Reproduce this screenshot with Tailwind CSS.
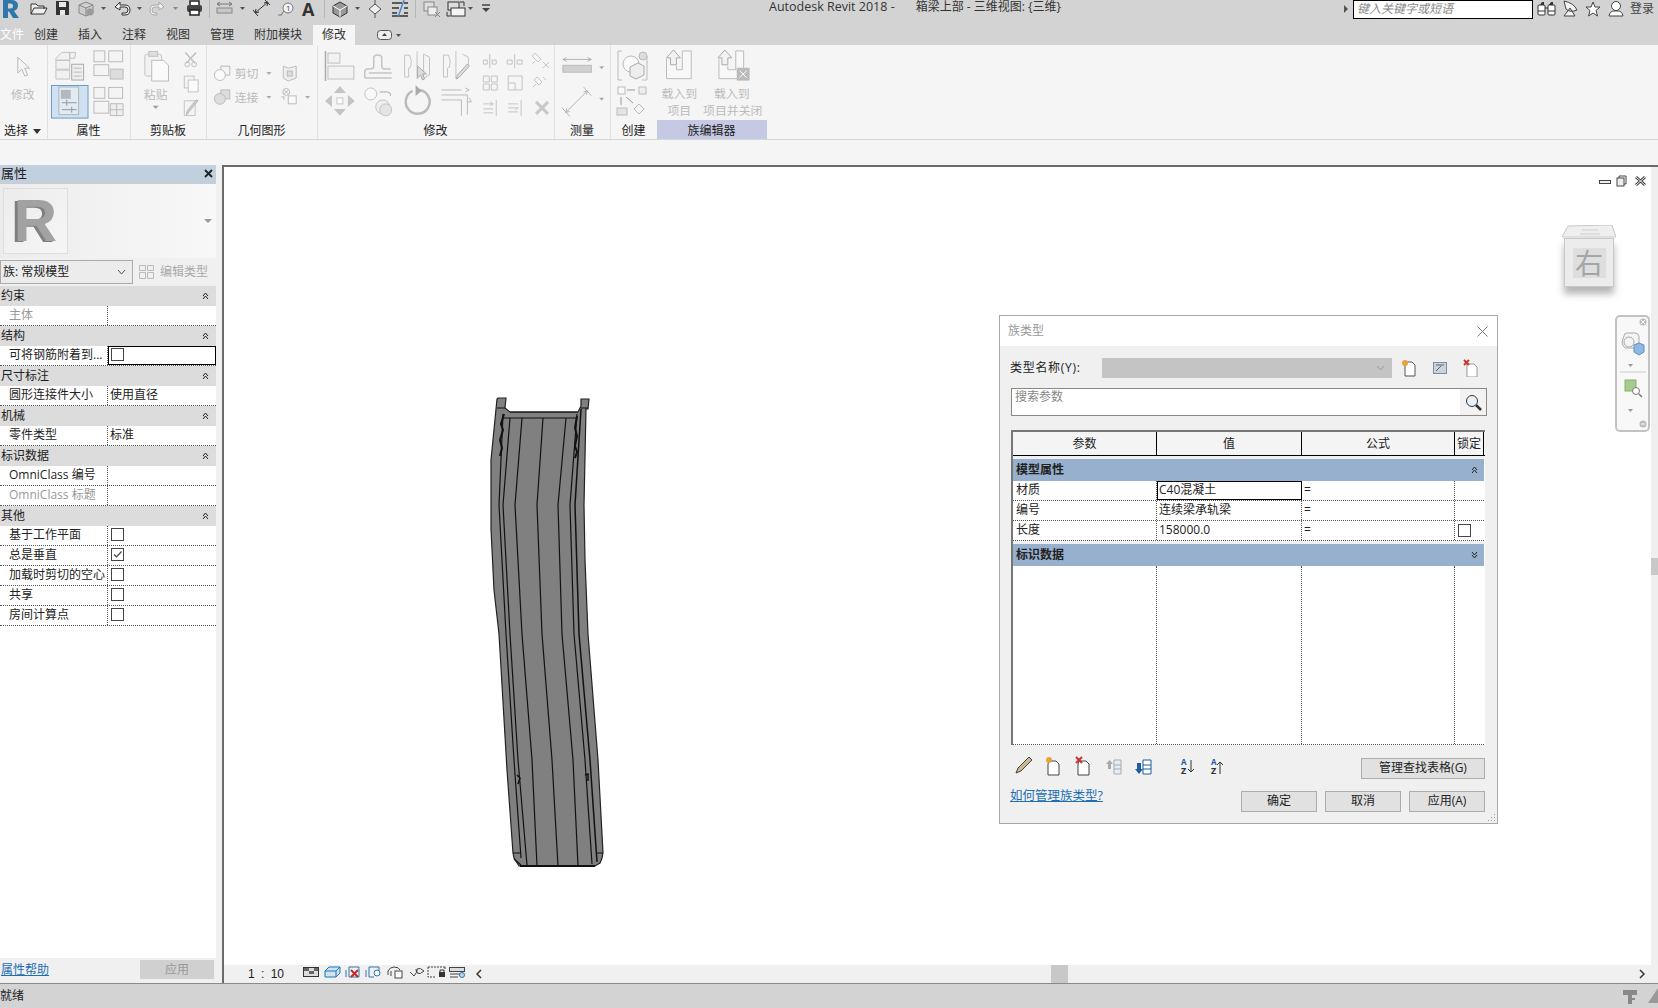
<!DOCTYPE html>
<html lang="zh-CN">
<head>
  <meta charset="UTF-8">
  <title>Autodesk Revit 2018</title>
  <script src="https://cdn.jsdelivr.net/npm/@tailwindcss/browser@4"></script>
</head>
<body class="bg-[#f5f5f5] overflow-hidden font-['Open_Sans','Noto_Sans_CJK_SC',sans-serif] text-[12px] leading-none text-[#222]">
<div class="relative w-[1658px] h-[1008px] flex flex-col overflow-hidden">

  <!-- title bar + tabs -->
  <header class="h-[45px] bg-[#d3d3d3] shrink-0">
    <div class="flex h-[20px] items-start">
      <svg class="w-[500px] h-[20px] shrink-0" viewBox="0 0 500 20">
        <path fill-rule="evenodd" d="M3 0h8q7 0 7 5.500 0 4-4 5.500l5 7h-6l-4-6.500H8V18H3zM8 3.500v5h2.500q2.500 0 2.500-2.500t-2.500-2.500z" fill="#2f77a8"/>
        <path d="M31 14V4h5l2 2h6v3M31 14l3-6h13l-3 6z" fill="#eee" stroke="#333"/>
        <path d="M56 1h12l1 1v13H56z" fill="#333"/><rect x="59" y="2" width="7" height="5" fill="#e8e8e8"/><rect x="60" y="10" width="5" height="5" fill="#e8e8e8"/>
        <path d="M79 5l7-3 7 3v8l-7 3-7-3zM79 5l7 3 7-3M86 8v8" fill="#ccc" stroke="#888"/><circle cx="90" cy="12" r="3.500" fill="#999"/>
        <path d="M101 7h5l-2.500 3z" fill="#555"/>
        <path d="M115 7l5-5v3h5q5 0 5 5t-5 5h-3v-2h3q3 0 3-3t-3-3h-5v3z" fill="#eee" stroke="#333"/>
        <path d="M137 7h5l-2.500 3z" fill="#555"/>
        <path d="M164 7l-5-5v3h-4q-5 0-5 5t5 5h2v-2h-2q-3 0-3-3t3-3h4v3z" fill="#eee" stroke="#aaa"/>
        <path d="M173 7h5l-2.500 3z" fill="#888"/>
        <rect x="190" y="1" width="9" height="5" fill="#fff" stroke="#222" stroke-width="1.500"/><rect x="187" y="5" width="15" height="7" rx="2" fill="#444"/><rect x="190" y="10" width="9" height="5" fill="#fff" stroke="#222" stroke-width="1.500"/>
        <path d="M209.500 0v18" stroke="#b5b5b5"/>
        <path d="M217 4h15M217 4l3-2M217 4l3 2M232 4l-3-2M232 4l-3 2" stroke="#777" fill="none"/><rect x="217" y="8" width="15" height="5" fill="#c8c8c8" stroke="#888"/>
        <path d="M240 7h5l-2.500 3z" fill="#555"/>
        <path d="M255 13l13-11M255 13l4-1M255 13l1-4M268 2l-4 1M268 2l-1 4M253 10l5 6M265 0l5 5" stroke="#333" fill="none"/>
        <circle cx="288" cy="8" r="5" fill="#f2f2f2" stroke="#777"/><path d="M281 15l3-4" stroke="#777"/><path d="M278 15h4" stroke="#777"/><text x="286" y="11" font-size="8" fill="#444">1</text>
        <text x="302" y="16" font-size="18" font-weight="700" fill="#333">A</text>
        <path d="M324.500 0v18" stroke="#b5b5b5"/>
        <path d="M333 6l7-4 7 4v7l-7 4-7-4z" fill="#999" stroke="#333"/><path d="M333 6l7 4 7-4M340 10v7" stroke="#fff" fill="none"/>
        <path d="M355 7h5l-2.500 3z" fill="#555"/>
        <path d="M369 9l6-5 6 5-6 5z" fill="#eee" stroke="#555"/><path d="M375 0v4M375 14v4" stroke="#555"/>
        <path d="M392 3h10M392 8h7M392 13h5M392 16h16M404 3h4M404 8h4M404 13h4" stroke="#333" stroke-width="1.500"/><path d="M398 17l6-17" stroke="#3b86d6" stroke-width="1.300"/>
        <path d="M415.500 0v18" stroke="#b5b5b5"/>
        <rect x="424" y="2" width="10" height="9" fill="#ddd" stroke="#888"/><rect x="428" y="7" width="9" height="8" fill="#eee" stroke="#888"/><path d="M435 12l5 5M440 12l-5 5" stroke="#888"/>
        <rect x="448" y="2" width="11" height="8" fill="#ddd" stroke="#333"/><rect x="451" y="8" width="14" height="8" fill="#f4f4f4" stroke="#333"/><path d="M460 2h4v4M447 12v4h3" stroke="#333" fill="none"/>
        <path d="M468 7h5l-2.500 3z" fill="#555"/>
        <path d="M482 5h8" stroke="#444" stroke-width="1.500"/><path d="M482 8h8l-4 4z" fill="#444"/>
      </svg>
      <div class="ml-[269px] text-[12.500px] leading-[14px] whitespace-pre text-[#333]">Autodesk Revit 2018 -</div>
      <div class="ml-[21px] leading-[14px] whitespace-pre text-[#333]">箱梁上部 - 三维视图: {三维}</div>
      <div class="ml-auto flex items-start">
        <svg class="w-[6px] h-[18px] mr-[4px]" viewBox="0 0 6 18"><path d="M1 5l4 4-4 4z" fill="#555"/></svg>
        <div class="w-[180px] h-[19px] border border-black bg-white pl-[3px] pt-[2px] text-[#888] italic">键入关键字或短语</div>
        <svg class="w-[125px] h-[19px]" viewBox="1533 0 125 19">
          <path d="M1540 5l2-3h2v3zM1549 5l2-3h2v3z" fill="#333"/><rect x="1538" y="5" width="7" height="10" rx="1" fill="#fff" stroke="#333"/><rect x="1548" y="5" width="7" height="10" rx="1" fill="#fff" stroke="#333"/><path d="M1538 11h7M1548 11h7M1545 8h3" stroke="#333"/>
          <path d="M1564 1q10 2 13 9-7 3-11-1zM1570 8l-6 8h11z" fill="#f2f2f2" stroke="#444"/>
          <path d="M1593 2l2 5h5l-4 3.500 1.500 5.500-4.500-3-4.500 3 1.500-5.500-4-3.500h5z" fill="#fff" stroke="#444"/>
          <circle cx="1616" cy="6" r="4.500" fill="#fff" stroke="#444"/><path d="M1609 16q1-5 5-5h4q4 0 5 5z" fill="#fff" stroke="#444"/>
          <text x="1630" y="13" font-size="12" fill="#444">登录</text>
        </svg>
      </div>
    </div>
    <nav class="flex mt-[5px] h-[20px] items-center text-center text-[#333]">
      <div class="w-[24px] text-white">文件</div>
      <div class="w-[44px]">创建</div>
      <div class="w-[44px]">插入</div>
      <div class="w-[44px]">注释</div>
      <div class="w-[44px]">视图</div>
      <div class="w-[44px]">管理</div>
      <div class="w-[68px]">附加模块</div>
      <div class="ml-[1px] w-[42px] h-[20px] bg-[#f5f5f5] pt-[4px]">修改</div>
      <svg class="ml-[22px] w-[24px] h-[12px]" viewBox="0 0 24 12"><rect x="0.500" y="1.500" width="14" height="9" rx="3" fill="#eee" stroke="#555"/><path d="M5 7l2.500-3 2.500 3z" fill="#444"/><path d="M19 5h5l-2.500 3z" fill="#555"/></svg>
    </nav>
  </header>

  <!-- ribbon -->
  <section class="h-[95px] shrink-0 flex bg-[#f5f5f5] border-b border-[#d6d6d6] text-center">
    <div class="w-[47.500px] border-r border-[#e0e0e0] flex flex-col">
      <svg class="w-full h-[76px]" viewBox="0 45 47 76">
        <path d="M18 57v16l4-4 3 7 3-1-3-7h5z" fill="#f5f5f5" stroke="#b8b8b8"/>
        <text x="11" y="99" font-size="12" fill="#bbb">修改</text>
      </svg>
      <div class="h-[18px] flex items-center pl-[4px] pt-[2px] gap-[5px]">选择<svg class="w-[8px] h-[5px]" viewBox="0 0 8 5"><path d="M0 0h8L4 5z" fill="#333"/></svg></div>
    </div>
    <div class="w-[83px] border-r border-[#e0e0e0] flex flex-col">
      <svg class="w-full h-[76px]" viewBox="48 45 83 76">
        <rect x="51.500" y="85.500" width="37" height="33" fill="#d0e2f1" stroke="#6a9ac6"/>
        <path d="M56 58l6-6h8v8h-14zM56 60h14v9h-14zM56 70h14v9h-14zM70 52l6 0-1 6h-5z" fill="#f1f1f1" stroke="#c2c2c2"/>
        <rect x="72" y="64" width="12" height="16" fill="#eee" stroke="#aaa"/><path d="M74 68h8M74 72h8M74 76h8" stroke="#bbb"/>
        <rect x="94.500" y="50.500" width="11" height="11" fill="#f4f4f4" stroke="#bbb"/><rect x="109.500" y="50.500" width="14" height="11" fill="#f4f4f4" stroke="#bbb"/><rect x="94.500" y="64.500" width="15" height="11" fill="#f4f4f4" stroke="#bbb"/><rect x="111" y="69" width="13" height="10" fill="#ddd" stroke="#bbb"/>
        <rect x="59" y="87" width="20" height="28" fill="#e3eaf0" stroke="#a8b6c2"/><rect x="61" y="90" width="10" height="9" fill="#b2b8bd"/><path d="M62 103h15M62 110h15M67 100v6M72 107v6" stroke="#8c9aa5"/>
        <rect x="94.500" y="87.500" width="11" height="11" fill="#f4f4f4" stroke="#bbb"/><rect x="109.500" y="87.500" width="14" height="11" fill="#f4f4f4" stroke="#bbb"/><rect x="94.500" y="101.500" width="15" height="12" fill="#f4f4f4" stroke="#bbb"/><path d="M111 104h13v12h-13zM117.500 104v12M111 110h13" fill="#eee" stroke="#bbb"/>
      </svg>
      <div class="h-[18px] pt-[2px] flex items-center justify-center">属性</div>
    </div>
    <div class="w-[76px] border-r border-[#e0e0e0] flex flex-col">
      <svg class="w-full h-[76px]" viewBox="131 45 76 76">
        <rect x="145" y="54" width="17" height="22" rx="2" fill="#f2f2f2" stroke="#c4c4c4"/><rect x="149" y="51" width="9" height="5" fill="#ddd" stroke="#c4c4c4"/><path d="M152 60h12l5 5v16h-17z" fill="#fafafa" stroke="#bbb"/>
        <text x="144" y="99" font-size="12" fill="#bbb">粘贴</text><path d="M153 106h6l-3 3z" fill="#999"/>
        <path d="M186 52l10 11M197 52l-10 11" stroke="#c0c0c0" stroke-width="1.500"/><circle cx="188" cy="64" r="2.500" fill="none" stroke="#c0c0c0"/><circle cx="195" cy="64" r="2.500" fill="none" stroke="#c0c0c0"/>
        <rect x="185" y="76" width="10" height="12" fill="#f4f4f4" stroke="#c4c4c4"/><rect x="189" y="80" width="10" height="12" fill="#fafafa" stroke="#c4c4c4"/>
        <path d="M185 101h11v15h-11z" fill="#f4f4f4" stroke="#c4c4c4"/><path d="M199 101l-9 11-3 4 1-5 9-11z" fill="#ccc" stroke="#bbb"/>
      </svg>
      <div class="h-[18px] pt-[2px] flex items-center justify-center">剪贴板</div>
    </div>
    <div class="w-[111px] border-r border-[#e0e0e0] flex flex-col">
      <svg class="w-full h-[76px]" viewBox="207 45 111 76">
        <rect x="221" y="66" width="9" height="9" fill="#f4f4f4" stroke="#bbb"/><circle cx="220" cy="75" r="5.500" fill="#fafafa" stroke="#bbb"/>
        <text x="235" y="78" font-size="12" fill="#bbb">剪切</text><path d="M267 72h5l-2.500 3z" fill="#aaa"/>
        <path d="M284 66l5 2 8-2v12l-8 3-5-3z" fill="#eee" stroke="#bbb"/><rect x="288" y="71" width="5" height="5" fill="#ddd" stroke="#bbb"/>
        <rect x="221" y="90" width="9" height="9" fill="#ddd" stroke="#bbb"/><circle cx="220" cy="99" r="5.500" fill="#ddd" stroke="#bbb"/>
        <text x="235" y="102" font-size="12" fill="#bbb">连接</text><path d="M267 96h5l-2.500 3z" fill="#aaa"/>
        <circle cx="287" cy="92" r="3.500" fill="none" stroke="#bbb"/><path d="M285 90l4 4M289 90l-4 4" stroke="#bbb"/><rect x="289" y="96" width="8" height="8" fill="#fafafa" stroke="#bbb"/><path d="M282 97h3l-1 3" stroke="#bbb" fill="none"/>
        <path d="M306 96h5l-2.500 3z" fill="#aaa"/>
      </svg>
      <div class="h-[18px] pt-[2px] flex items-center justify-center">几何图形</div>
    </div>
    <div class="w-[237px] border-r border-[#e0e0e0] flex flex-col">
      <svg class="w-full h-[76px]" viewBox="318 45 237 76">
        <path d="M325.500 51v30" stroke="#aaa" stroke-width="1.500"/><rect x="328" y="53" width="12" height="10" fill="#f2f2f2" stroke="#c0c0c0"/><rect x="328" y="66" width="26" height="13" fill="#f2f2f2" stroke="#c0c0c0"/>
        <path d="M365 78v-6q0-3 3-3h3q3 0 3-3v-8q0-3 4-3t4 3v8q0 3 3 3h6M392 78h-27M369 73h23" fill="none" stroke="#c4c4c4" stroke-width="1.500"/>
        <path d="M405 55h5q3 6 1 12l-2 1v9h-4zM424 54l6 3v18l-6 3zM417.500 51v28" fill="#f5f5f5" stroke="#c4c4c4"/><path d="M418 66v12l3-3 2 5 2-1-2-5h4z" fill="#ddd" stroke="#aaa"/>
        <path d="M444 55h5q3 6 1 12l-2 1v9h-4zM456.500 51v28M463 54l6 3v8" fill="#f5f5f5" stroke="#c4c4c4"/><path d="M470 66l-10 11-3 2 1-4 10-11z" fill="#ddd" stroke="#aaa"/>
        <path d="M484 60h4v4h-4zM493 60h4v4h-4zM490.500 54v14M508 60h5v4h-5zM518 60h5v4h-5zM515.500 54v14M536 53l6 6-3 3-6-6zM533 64l3-3M544 62l6 6M550 62l-6 6" fill="none" stroke="#c4c4c4"/>
        <path d="M484 76h6v6h-6zM492 76h6v6h-6zM484 84h6v6h-6zM492 84h6v6h-6zM509 76h14v14h-14zM509 83h7v7" fill="none" stroke="#c4c4c4"/><path d="M538 77l5 5-3 3-5-5zM534 87l3-3M544 77l3 3" fill="none" stroke="#c4c4c4"/>
        <path d="M484 104h10l-3-2M494 104l-3 2M484 109h10M484 113h10M497 100v16M509 104h10M509 108h10l-3 2M509 112h10M522 100v16" fill="none" stroke="#c4c4c4"/><path d="M537 102l12 12M549 102l-12 12" stroke="#c8c8c8" stroke-width="3"/>
        <path d="M340 86l6 7h-12zM340 116l6-7h-12zM325 101l7-6v12zM355 101l-7-6v12z" fill="#c4c4c4"/><rect x="337" y="98" width="6" height="6" fill="#fff" stroke="#c4c4c4"/>
        <circle cx="371" cy="94" r="6" fill="#f8f8f8" stroke="#c4c4c4"/><circle cx="383" cy="107" r="7" fill="#eee" stroke="#c4c4c4"/><circle cx="386" cy="110" r="6" fill="#e4e4e4" stroke="#c4c4c4"/><path d="M380 92h8q3 0 3 4" fill="none" stroke="#aaa"/>
        <path d="M413 91a12 12 0 1 0 7-1" fill="none" stroke="#bbb" stroke-width="2.500"/><path d="M416 85v11l6-5z" fill="#aaa"/>
        <path d="M442 95h26v20M442 100h20v16M442 90h20M466 88l4 2-4 2M470 98l2 4h-4" fill="none" stroke="#bbb"/>
      </svg>
      <div class="h-[18px] pt-[2px] flex items-center justify-center">修改</div>
    </div>
    <div class="w-[56px] border-r border-[#e0e0e0] flex flex-col">
      <svg class="w-full h-[76px]" viewBox="555 45 56 76">
        <path d="M563 59h29M563 59l4-2M563 59l4 2M592 59l-4-2M592 59l-4 2" stroke="#b5b5b5" fill="none"/><rect x="563" y="65" width="29" height="7" fill="#d0d0d0" stroke="#bbb"/><path d="M600 66h5l-2.500 3z" fill="#aaa"/>
        <path d="M566 113l22-22M566 113l4-1M566 113l1-4M588 91l-4 1M588 91l-1 4M562 108l8 9M584 87l8 9" stroke="#b5b5b5" fill="none"/><path d="M600 98h5l-2.500 3z" fill="#aaa"/>
      </svg>
      <div class="h-[18px] pt-[2px] flex items-center justify-center">测量</div>
    </div>
    <div class="w-[46px] flex flex-col">
      <svg class="w-full h-[76px]" viewBox="612 45 46 76">
        <path d="M623 51h-4v29h4M643 80h5v-24" fill="none" stroke="#bbb"/><circle cx="632" cy="64" r="8" fill="#fafafa" stroke="#bbb"/><path d="M631 67l8-4 6 3v9l-8 4-6-3z" fill="#eee" stroke="#aaa"/><circle cx="644" cy="56" r="4" fill="#ddd" stroke="#bbb"/>
        <rect x="619" y="87" width="7" height="7" fill="#fafafa" stroke="#bbb"/><path d="M628 90h8" stroke="#999"/><rect x="640" y="87" width="7" height="7" fill="#eee" stroke="#bbb"/><path d="M622 97v8M627 97l7 6" stroke="#999"/><rect x="618" y="108" width="10" height="7" fill="#e4e4e4" stroke="#bbb"/><path d="M640 104l5 5-5 5-5-5z" fill="#f4f4f4" stroke="#bbb"/>
      </svg>
      <div class="h-[18px] pt-[2px] flex items-center justify-center">创建</div>
    </div>
    <div class="w-[110px] flex flex-col">
      <svg class="w-full h-[76px]" viewBox="657 45 110 76">
        <path d="M666 59v20h25V51h-9v19h-6v-4" fill="#f8f8f8" stroke="#bbb"/><path d="M673 50l7 8h-4v7h-6v-7h-4z" fill="#f2f2f2" stroke="#aaa"/>
        <text x="661" y="99" font-size="12" fill="#bbb">载入到</text><text x="667" y="116" font-size="12" fill="#bbb">项目</text>
        <path d="M719 59v20h25V51h-8v19h-8v-4" fill="#f8f8f8" stroke="#bbb"/><path d="M725 50l7 8h-4v7h-6v-7h-4z" fill="#f2f2f2" stroke="#aaa"/><rect x="737" y="68" width="13" height="13" fill="#bbb"/><path d="M740 71l7 7M747 71l-7 7" stroke="#fff"/>
        <text x="714" y="99" font-size="12" fill="#bbb">载入到</text><text x="703" y="116" font-size="12" fill="#bbb">项目并关闭</text>
      </svg>
      <div class="h-[19px] pt-[3px] flex items-center justify-center bg-[#c6c9e4]">族编辑器</div>
    </div>
  </section>

  <div class="h-[25px] shrink-0"></div>

  <!-- main area -->
  <main class="flex-1 flex min-h-0 border-b border-[#8a8a8a]">
    <aside class="w-[222px] shrink-0 flex flex-col bg-[#f0f0f0] pr-[6px]">
      <div class="h-[18px] bg-[#c1d0df] flex items-center justify-between px-[1px] pr-[3px] pb-[2px] text-[13px]">属性<svg class="w-[9px] h-[9px]" viewBox="0 0 9 9"><path d="M1 1l7 7M8 1l-7 7" stroke="#222" stroke-width="1.800"/></svg></div>
      <div class="h-[75px] flex items-center justify-between pl-[3px] pr-[4px] bg-gradient-to-r from-[#ececec] to-[#f8f8f8] border-t border-[#ccc]">
        <div class="w-[65px] h-[66px] border border-[#ddd] bg-gradient-to-br from-[#ececec] to-[#f6f6f6] flex items-center justify-center text-[60px] font-bold text-[#a2a2a2] [text-shadow:-3px_1px_0_#808080] font-['Liberation_Sans',sans-serif]">R</div>
        <svg class="w-[8px] h-[4px]" viewBox="0 0 8 4"><path d="M0 0h8L4 4z" fill="#999"/></svg>
      </div>
      <div class="h-[28px] flex items-center">
        <div class="w-[133px] h-[24px] bg-[#ececec] border border-[#aaa] flex items-center justify-between pl-[2px] pr-[6px] whitespace-pre">族: 常规模型<svg class="w-[9px] h-[5px]" viewBox="0 0 9 5"><path d="M1 0l3.500 4L8 0" stroke="#555" fill="none"/></svg></div>
        <svg class="ml-[6px] w-[16px] h-[16px]" viewBox="0 0 16 16"><path d="M.5 1.500h6v5h-6zM8.500 1.500h6v5h-6zM.5 8.500h6v6h-6zM8.500 8.500h6v6h-6z" fill="none" stroke="#bbb"/></svg>
        <span class="ml-[5px] text-[#aaa]">编辑类型</span>
      </div>

      <div class="flex-1 bg-white [&>div>div]:pb-[2px]">
        <div class="h-[20px] bg-[#dcdcdc] flex items-center justify-between pl-[1px] pr-[7px]">约束<svg class="w-[7px] h-[8px]" viewBox="0 0 7 8"><path d="M1 4l2.500-3L6 4M1 7l2.500-3L6 7" stroke="#222" fill="none"/></svg></div>
        <div class="h-[20px] flex border-b border-dotted border-[#555]"><div class="w-[108px] pl-[9px] flex items-center border-r border-dotted border-[#555] text-[#999]">主体</div><div class="flex-1"></div></div>
        <div class="h-[20px] bg-[#dcdcdc] flex items-center justify-between pl-[1px] pr-[7px]">结构<svg class="w-[7px] h-[8px]" viewBox="0 0 7 8"><path d="M1 4l2.500-3L6 4M1 7l2.500-3L6 7" stroke="#222" fill="none"/></svg></div>
        <div class="h-[20px] flex border-b border-dotted border-[#555]"><div class="w-[108px] pl-[9px] flex items-center border-r border-dotted border-[#555] whitespace-nowrap">可将钢筋附着到...</div><div class="flex-1 pl-[2px] flex items-center border border-black"><span class="w-[13px] h-[13px] border border-[#444] bg-white"></span></div></div>
        <div class="h-[20px] bg-[#dcdcdc] flex items-center justify-between pl-[1px] pr-[7px]">尺寸标注<svg class="w-[7px] h-[8px]" viewBox="0 0 7 8"><path d="M1 4l2.500-3L6 4M1 7l2.500-3L6 7" stroke="#222" fill="none"/></svg></div>
        <div class="h-[20px] flex border-b border-dotted border-[#555]"><div class="w-[108px] pl-[9px] flex items-center border-r border-dotted border-[#555]">圆形连接件大小</div><div class="flex-1 pl-[2px] flex items-center">使用直径</div></div>
        <div class="h-[20px] bg-[#dcdcdc] flex items-center justify-between pl-[1px] pr-[7px]">机械<svg class="w-[7px] h-[8px]" viewBox="0 0 7 8"><path d="M1 4l2.500-3L6 4M1 7l2.500-3L6 7" stroke="#222" fill="none"/></svg></div>
        <div class="h-[20px] flex border-b border-dotted border-[#555]"><div class="w-[108px] pl-[9px] flex items-center border-r border-dotted border-[#555]">零件类型</div><div class="flex-1 pl-[2px] flex items-center">标准</div></div>
        <div class="h-[20px] bg-[#dcdcdc] flex items-center justify-between pl-[1px] pr-[7px]">标识数据<svg class="w-[7px] h-[8px]" viewBox="0 0 7 8"><path d="M1 4l2.500-3L6 4M1 7l2.500-3L6 7" stroke="#222" fill="none"/></svg></div>
        <div class="h-[20px] flex border-b border-dotted border-[#555]"><div class="w-[108px] pl-[9px] flex items-center border-r border-dotted border-[#555] whitespace-pre">OmniClass 编号</div><div class="flex-1"></div></div>
        <div class="h-[20px] flex border-b border-dotted border-[#555]"><div class="w-[108px] pl-[9px] flex items-center border-r border-dotted border-[#555] whitespace-pre text-[#999]">OmniClass 标题</div><div class="flex-1"></div></div>
        <div class="h-[20px] bg-[#dcdcdc] flex items-center justify-between pl-[1px] pr-[7px]">其他<svg class="w-[7px] h-[8px]" viewBox="0 0 7 8"><path d="M1 4l2.500-3L6 4M1 7l2.500-3L6 7" stroke="#222" fill="none"/></svg></div>
        <div class="h-[20px] flex border-b border-dotted border-[#555]"><div class="w-[108px] pl-[9px] flex items-center border-r border-dotted border-[#555]">基于工作平面</div><div class="flex-1 pl-[3px] flex items-center"><span class="w-[13px] h-[13px] border border-[#444]"></span></div></div>
        <div class="h-[20px] flex border-b border-dotted border-[#555]"><div class="w-[108px] pl-[9px] flex items-center border-r border-dotted border-[#555]">总是垂直</div><div class="flex-1 pl-[3px] flex items-center"><svg class="w-[13px] h-[13px] border border-[#444]" viewBox="0 0 11 11"><path d="M2 5.500l2.500 2.500L9.500 2.500" stroke="#444" stroke-width="1.200" fill="none"/></svg></div></div>
        <div class="h-[20px] flex border-b border-dotted border-[#555]"><div class="w-[108px] pl-[9px] flex items-center border-r border-dotted border-[#555] whitespace-nowrap">加载时剪切的空心</div><div class="flex-1 pl-[3px] flex items-center"><span class="w-[13px] h-[13px] border border-[#444]"></span></div></div>
        <div class="h-[20px] flex border-b border-dotted border-[#555]"><div class="w-[108px] pl-[9px] flex items-center border-r border-dotted border-[#555]">共享</div><div class="flex-1 pl-[3px] flex items-center"><span class="w-[13px] h-[13px] border border-[#444]"></span></div></div>
        <div class="h-[20px] flex border-b border-dotted border-[#555]"><div class="w-[108px] pl-[9px] flex items-center border-r border-dotted border-[#555]">房间计算点</div><div class="flex-1 pl-[3px] flex items-center"><span class="w-[13px] h-[13px] border border-[#444]"></span></div></div>
      </div>

      <div class="h-[25px] flex items-center justify-between pr-[2px] pl-[1px] pb-[2px]">
        <a class="text-[#1c6fb5] underline">属性帮助</a>
        <div class="w-[74px] h-[19px] bg-[#d0d0d0] flex items-center justify-center text-[#999]">应用</div>
      </div>
    </aside>

    <div class="flex-1 flex flex-col min-w-0 border-l-2 border-t-2 border-[#6b6b6b]">
      <div class="flex-1 flex min-h-0">
        <div class="flex-1 relative bg-white">
          <!-- window controls -->
          <svg class="absolute left-[1375px] top-[8px] w-[48px] h-[12px]" viewBox="0 0 48 12">
            <rect x="0.500" y="5.500" width="11" height="3" fill="#eee" stroke="#444"/><rect x="18" y="3" width="7" height="8" fill="#eee" stroke="#444"/><path d="M20 3V1h7v8h-2" fill="none" stroke="#444"/>
            <path d="M37 2l9 8M46 2l-9 8" stroke="#444" stroke-width="3"/><path d="M37 2l9 8M46 2l-9 8" stroke="#eee"/>
          </svg>
          <!-- view cube -->
          <div class="absolute left-[1338px] top-[58px] w-[54px] h-[62px]">
            <svg class="w-[54px] h-[13px] block" viewBox="0 0 54 13"><path d="M6 1l44-1 4 12H0z" fill="#efefef" stroke="#c8c8c8"/><path d="M20 5h16M18 9h20" stroke="#ccc"/></svg>
            <div class="h-[49px] mx-[2px] bg-[#ececec] border border-[#c8c8c8] flex items-center justify-center shadow-[0_7px_7px_rgba(90,90,90,0.45)]"><div class="w-[33px] h-[30px] bg-[#dedede] text-[28px] text-[#a5a5a5] flex items-center justify-center">右</div></div>
          </div>
          <!-- navigation bar -->
          <div class="absolute left-[1391px] top-[148px] w-[35px] h-[117px] rounded-[5px] border-2 border-[#c2c2c2] bg-[#f8f8f8]">
            <svg class="w-full h-full" viewBox="1617 317 31 113">
              <circle cx="1643" cy="322" r="3.500" fill="#bbb"/><path d="M1641 320l4 4M1645 320l-4 4" stroke="#fff"/>
              <path d="M1624 336q0-3 3-3h8q3 0 4 3v8l-4 4h-10q-3-3-3-6z" fill="#f4f4f4" stroke="#aaa"/><circle cx="1629" cy="342" r="5" fill="none" stroke="#aaa"/><path d="M1634 345l5-2 5 2v7l-5 3-5-3z" fill="#8fb8e4" stroke="#5f8fc2"/>
              <path d="M1628 364h5l-2.500 3z" fill="#999"/><path d="M1620 372h26" stroke="#ccc"/>
              <rect x="1625" y="380" width="11" height="11" fill="#a6cc8b" stroke="#8cae73"/><circle cx="1636" cy="391" r="3.500" fill="#fff" stroke="#777"/><path d="M1639 394l3 3" stroke="#777" stroke-width="1.500"/>
              <path d="M1628 409h5l-2.500 3z" fill="#999"/>
              <circle cx="1643" cy="424" r="3.500" fill="#bbb"/><path d="M1641 424h4" stroke="#fff"/>
            </svg>
          </div>
          <!-- beam model, coordinates are page pixels -->
          <svg class="absolute left-[262px] top-[223px] w-[130px] h-[480px]" viewBox="486 390 130 480" fill="none" stroke="#111" stroke-width="1.200">
            <path d="M498 398L506 398 505 408 510 412 578 412 581 406 581 399 589 399 588 409 586 409 584 505 585 560 588 634 598 760 603 853 602 858 600 863 595 866 519 866 514 858 513 853 507 770 499 634 494 590 491 529 491 460 497 399z" fill="#808080" stroke="#222"/>
            <path d="M510 412L578 412M503 418L577 418M497 408L505 408M581 408L588 408"/>
            <path d="M503 414L499 505 506 634 514 760 521 858"/>
            <path d="M510 418L503 505 510 634 518 760 527 865"/>
            <path d="M522 418L515 505 522 634 532 760 537 866"/>
            <path d="M543 418L537 505 542 634 552 760 558 866"/>
            <path d="M566 418L558 505 562 634 573 760 578 866"/>
            <path d="M577 414L570 505 574 634 585 760 592 864"/>
            <path d="M581 409L575 505 579 634 590 760 597 862" stroke-width="1.500"/>
            <path d="M504 414L501 424 503 430 500 440 502 448 500 456M577 416L575 428 577 436 575 446 577 452 575 458" stroke-width="2"/>
            <path d="M513 853L520 853M596 853L603 853M514 859L521 865"/>
            <path d="M517 775L520 778 518 784M585 775L588 774 588 781" stroke-width="1.500"/>
            <path d="M520 866L595 866" stroke-width="2"/>
          </svg>
        </div>
        <div class="w-[7px] bg-[#efefef] flex flex-col items-center">
          <div class="h-[391px]"></div>
          <div class="w-[7px] h-[17px] bg-[#c8c8c8]"></div>
        </div>
      </div>
      <!-- view control bar -->
      <div class="h-[18px] shrink-0 bg-[#f0f0f0] flex items-center">
        <span class="ml-[24px] w-[36px] whitespace-pre [word-spacing:3px] font-['Liberation_Sans',sans-serif]">1 : 10</span>
        <svg class="ml-[19px] w-[170px] h-[16px]" viewBox="303 966 170 16">
          <rect x="303.500" y="967.500" width="15" height="9" fill="#ddd" stroke="#333"/><path d="M304 968h5v3h-5zM314 968h4v3h-4zM309 971h5v3h-5z" fill="#666"/>
          <path d="M325 976v-5l4-4h11v6l-4 4h-11zM325 971h11v6M336 971l4-4" fill="#cfe3f1" stroke="#1f77b4"/>
          <path d="M346 977v-7M349 972v-5h10v10h-10z" fill="none" stroke="#2a76b0"/><path d="M351 970l7 7M358 970l-7 7" stroke="#c62828" stroke-width="2"/>
          <path d="M366 977v-7M369 972v-5h10v4M369 972v5h5" fill="none" stroke="#2a76b0"/><circle cx="377" cy="973" r="3" fill="#fff" stroke="#2a76b0"/>
          <path d="M388 975v-4q2-4 6-4 5 0 6 3" fill="none" stroke="#444"/><rect x="395" y="971" width="7" height="7" fill="#fff" stroke="#444"/><path d="M391 971v5" stroke="#444"/>
          <path d="M410 972l4 4q4-4 2-7M417 969q3-2 7 2-4 4-7 2z" fill="none" stroke="#444"/>
          <path d="M428 967h17M428 967v10h8M445 967v3" fill="none" stroke="#444" stroke-dasharray="2 1"/><rect x="439" y="972" width="6" height="5" fill="#333"/><path d="M440 972v-2h4v2" fill="none" stroke="#333"/>
          <rect x="449.500" y="967.500" width="15" height="4" fill="#ddd" stroke="#444"/><path d="M450 974h10M450 977h8" stroke="#444"/><circle cx="462" cy="975" r="2.500" fill="#bcd8ee" stroke="#2a76b0"/>
        </svg>
        <svg class="ml-[3px] w-[6px] h-[10px]" viewBox="0 0 6 10"><path d="M5 1L1 5l4 4" stroke="#333" stroke-width="1.500" fill="none"/></svg>
        <div class="ml-[569px] w-[17px] h-[18px] bg-[#c8c8c8]"></div>
        <svg class="ml-[571px] w-[6px] h-[10px]" viewBox="0 0 6 10"><path d="M1 1l4 4-4 4" stroke="#333" stroke-width="1.500" fill="none"/></svg>
      </div>
    </div>
  </main>

  <!-- status bar -->
  <footer class="h-[24px] shrink-0 bg-[#d3d3d3] flex items-center justify-between">
    <span>就绪</span>
    <svg class="w-[38px] h-[20px]" viewBox="1620 986 38 20"><path d="M1623 990h14v5h-5v3h3v2h-3v4h-4v-9h-5z" fill="#888"/><path d="M1658 988v15h-10z" fill="#999"/></svg>
  </footer>

  <!-- 族类型 dialog -->
  <div class="absolute left-[999px] top-[315px] w-[499px] h-[509px] bg-[#f0f0f0] border border-[#a8a8a8] flex flex-col">
    <div class="h-[30px] shrink-0 bg-white flex items-center justify-between pl-[8px] pr-[9px] text-[#999]">族类型<svg class="w-[11px] h-[11px]" viewBox="0 0 11 11"><path d="M.5.5l10 10M10.500.5l-10 10" stroke="#777"/></svg></div>
    <div class="flex items-center h-[20px] mt-[12px] pl-[10px]">
      <span class="w-[92px] whitespace-pre tracking-[0.7px]">类型名称(Y):</span>
      <div class="w-[290px] h-[20px] bg-[#c4c4c4] flex items-center justify-end pr-[7px]"><svg class="w-[9px] h-[5px]" viewBox="0 0 9 5"><path d="M1 0l3.500 4L8 0" stroke="#999" fill="none"/></svg></div>
      <svg class="ml-[9px] w-[82px] h-[18px]" viewBox="1402 359 82 18">
        <path d="M1406 362h7l3 3v11h-10z" fill="#fff" stroke="#555"/><circle cx="1406" cy="363" r="3" fill="#e8a33c"/>
        <rect x="1434.500" y="362.500" width="13" height="11" fill="#c6d4e2" stroke="#889"/><path d="M1437 365h8M1437 371l5-5" stroke="#567"/>
        <path d="M1468 364h7l3 3v10h-10z" fill="#fff" stroke="#999"/><path d="M1465 360l5 5M1470 360l-5 5" stroke="#c33" stroke-width="2"/>
      </svg>
    </div>
    <div class="mx-[11px] mt-[10px] h-[28px] shrink-0 w-[476px] bg-white border border-[#888] flex justify-between text-[#888] pl-[3px]">
      <span class="pt-[2px]">搜索参数</span>
      <div class="w-[26px] h-[26px] bg-[#f2f2f2] flex items-center justify-center"><svg class="w-[17px] h-[17px]" viewBox="0 0 17 17"><circle cx="7" cy="7" r="5.500" fill="#e8f1f8" stroke="#333"/><path d="M11 11l5 5" stroke="#333" stroke-width="2.500"/></svg></div>
    </div>

    <!-- parameter table -->
    <div class="ml-[11px] mt-[14px] w-[474px] h-[315px] shrink-0 border-l-2 border-t-2 border-[#777] bg-white flex flex-col">
      <div class="h-[24px] shrink-0 flex bg-[#f4f4f4] border-b border-black text-center">
        <div class="w-[144px] border-r border-black flex items-center justify-center">参数</div>
        <div class="w-[145px] border-r border-black flex items-center justify-center">值</div>
        <div class="w-[153px] border-r border-black flex items-center justify-center">公式</div>
        <div class="w-[29px] border-r border-black flex items-center justify-center">锁定</div>
      </div>
      <div class="h-[3px] shrink-0 bg-[#f0f0f0]"></div>
      <div class="h-[22px] shrink-0 w-[471px] bg-[#96b0ce] flex items-center justify-between pl-[3px] pr-[6px] font-bold">模型属性<svg class="w-[7px] h-[8px]" viewBox="0 0 7 8"><path d="M1 4l2.500-3L6 4M1 7l2.500-3L6 7" stroke="#222" fill="none"/></svg></div>
      <div class="h-[20px] shrink-0 w-[471px] flex border-b border-dotted border-[#555]">
        <div class="w-[144px] pl-[3px] pb-[2px] flex items-center border-r border-dotted border-[#555]">材质</div>
        <div class="w-[145px] pl-[1px] pb-[1px] flex items-center border border-black">C40混凝土</div>
        <div class="w-[153px] pl-[2px] pb-[2px] flex items-center border-r border-dotted border-[#555]">=</div>
      </div>
      <div class="h-[20px] shrink-0 w-[471px] flex border-b border-dotted border-[#555]">
        <div class="w-[144px] pl-[3px] pb-[2px] flex items-center border-r border-dotted border-[#555]">编号</div>
        <div class="w-[145px] pl-[2px] pb-[2px] flex items-center border-r border-dotted border-[#555]">连续梁承轨梁</div>
        <div class="w-[153px] pl-[2px] pb-[2px] flex items-center border-r border-dotted border-[#555]">=</div>
      </div>
      <div class="h-[20px] shrink-0 w-[471px] flex border-b border-dotted border-[#555]">
        <div class="w-[144px] pl-[3px] pb-[2px] flex items-center border-r border-dotted border-[#555]">长度</div>
        <div class="w-[145px] pl-[2px] pb-[2px] flex items-center border-r border-dotted border-[#555]">158000.0</div>
        <div class="w-[153px] pl-[2px] pb-[2px] flex items-center border-r border-dotted border-[#555]">=</div>
        <div class="flex-1 pl-[3px] flex items-center"><span class="w-[13px] h-[13px] border border-[#444]"></span></div>
      </div>
      <div class="h-[3px] shrink-0 bg-[#f0f0f0]"></div>
      <div class="h-[22px] shrink-0 w-[471px] bg-[#96b0ce] flex items-center justify-between pl-[3px] pr-[6px] font-bold">标识数据<svg class="w-[7px] h-[8px]" viewBox="0 0 7 8"><path d="M1 1l2.500 3L6 1M1 4l2.500 3L6 4" stroke="#222" fill="none"/></svg></div>
      <div class="flex-1 w-[471px] flex border-b border-dotted border-[#555]">
        <div class="w-[144px] border-r border-dotted border-[#555]"></div>
        <div class="w-[145px] border-r border-dotted border-[#555]"></div>
        <div class="w-[153px] border-r border-dotted border-[#555]"></div>
      </div>
    </div>

    <div class="flex items-center justify-between mt-[12px] pl-[13px] pr-[12px] h-[22px] shrink-0">
      <svg class="w-[215px] h-[20px] -mt-[4px]" viewBox="1013 758 215 20">
        <path d="M1016 775l2-5 11-11 3 3-11 11z" fill="#c9b98f" stroke="#444"/>
        <path d="M1049 763h7l3 3v11h-11v-11z" fill="#fff" stroke="#444"/><circle cx="1049" cy="762" r="3" fill="#e8a33c"/>
        <path d="M1079 763h7l3 3v11h-11v-11z" fill="#fff" stroke="#444"/><path d="M1076 759l6 6M1082 759l-6 6" stroke="#c33" stroke-width="2"/>
        <g transform="translate(-3 0)"><path d="M1111 771h3v-5h2l-3.500-4-3.500 4h2z" fill="#aaa"/><path d="M1117 762h7v14h-7zM1117 767h7M1117 771h7" fill="#e5eef5" stroke="#aaa"/></g>
        <g transform="translate(-4 0)"><path d="M1141 765h4v6h2l-4 5-4-5h2z" fill="#1f5f9e"/><path d="M1147 762h8v14h-8zM1147 767h8M1147 771h8" fill="#fff" stroke="#1f5f9e"/></g>
        <text x="1181" y="767" font-size="8" font-weight="700" fill="#1f5f9e">A</text><text x="1181" y="776" font-size="9" font-weight="700" fill="#333">Z</text><path d="M1191 762v12M1188 771l3 3 3-3" stroke="#333" fill="none"/>
        <text x="1211" y="767" font-size="8" font-weight="700" fill="#1f5f9e">A</text><text x="1211" y="776" font-size="9" font-weight="700" fill="#333">Z</text><path d="M1220 764v12M1217 767l3-3 3 3" stroke="#333" fill="none"/>
      </svg>
      <div class="w-[124px] h-[21px] bg-[#e1e1e1] border border-[#adadad] flex items-center justify-center whitespace-pre">管理查找表格(G)</div>
    </div>
    <div class="flex items-center mt-[11px] pl-[10px] pr-[12px] h-[22px] shrink-0">
      <a class="text-[#1c6fb5] underline mr-auto -mt-[10px] whitespace-pre text-[12.500px]">如何管理族类型?</a>
      <div class="w-[76px] h-[21px] bg-[#e1e1e1] border border-[#adadad] flex items-center justify-center">确定</div>
      <div class="ml-[8px] w-[76px] h-[21px] bg-[#e1e1e1] border border-[#adadad] flex items-center justify-center">取消</div>
      <div class="ml-[8px] w-[76px] h-[21px] bg-[#e1e1e1] border border-[#adadad] flex items-center justify-center whitespace-pre">应用(A)</div>
    </div>
    <svg class="absolute right-[1px] bottom-[1px] w-[9px] h-[9px]" viewBox="0 0 9 9"><path d="M7 1h1v1H7zM4 4h1v1H4zM7 4h1v1H7zM1 7h1v1H1zM4 7h1v1H4zM7 7h1v1H7z" fill="#999"/></svg>
  </div>
</div>
</body>
</html>
